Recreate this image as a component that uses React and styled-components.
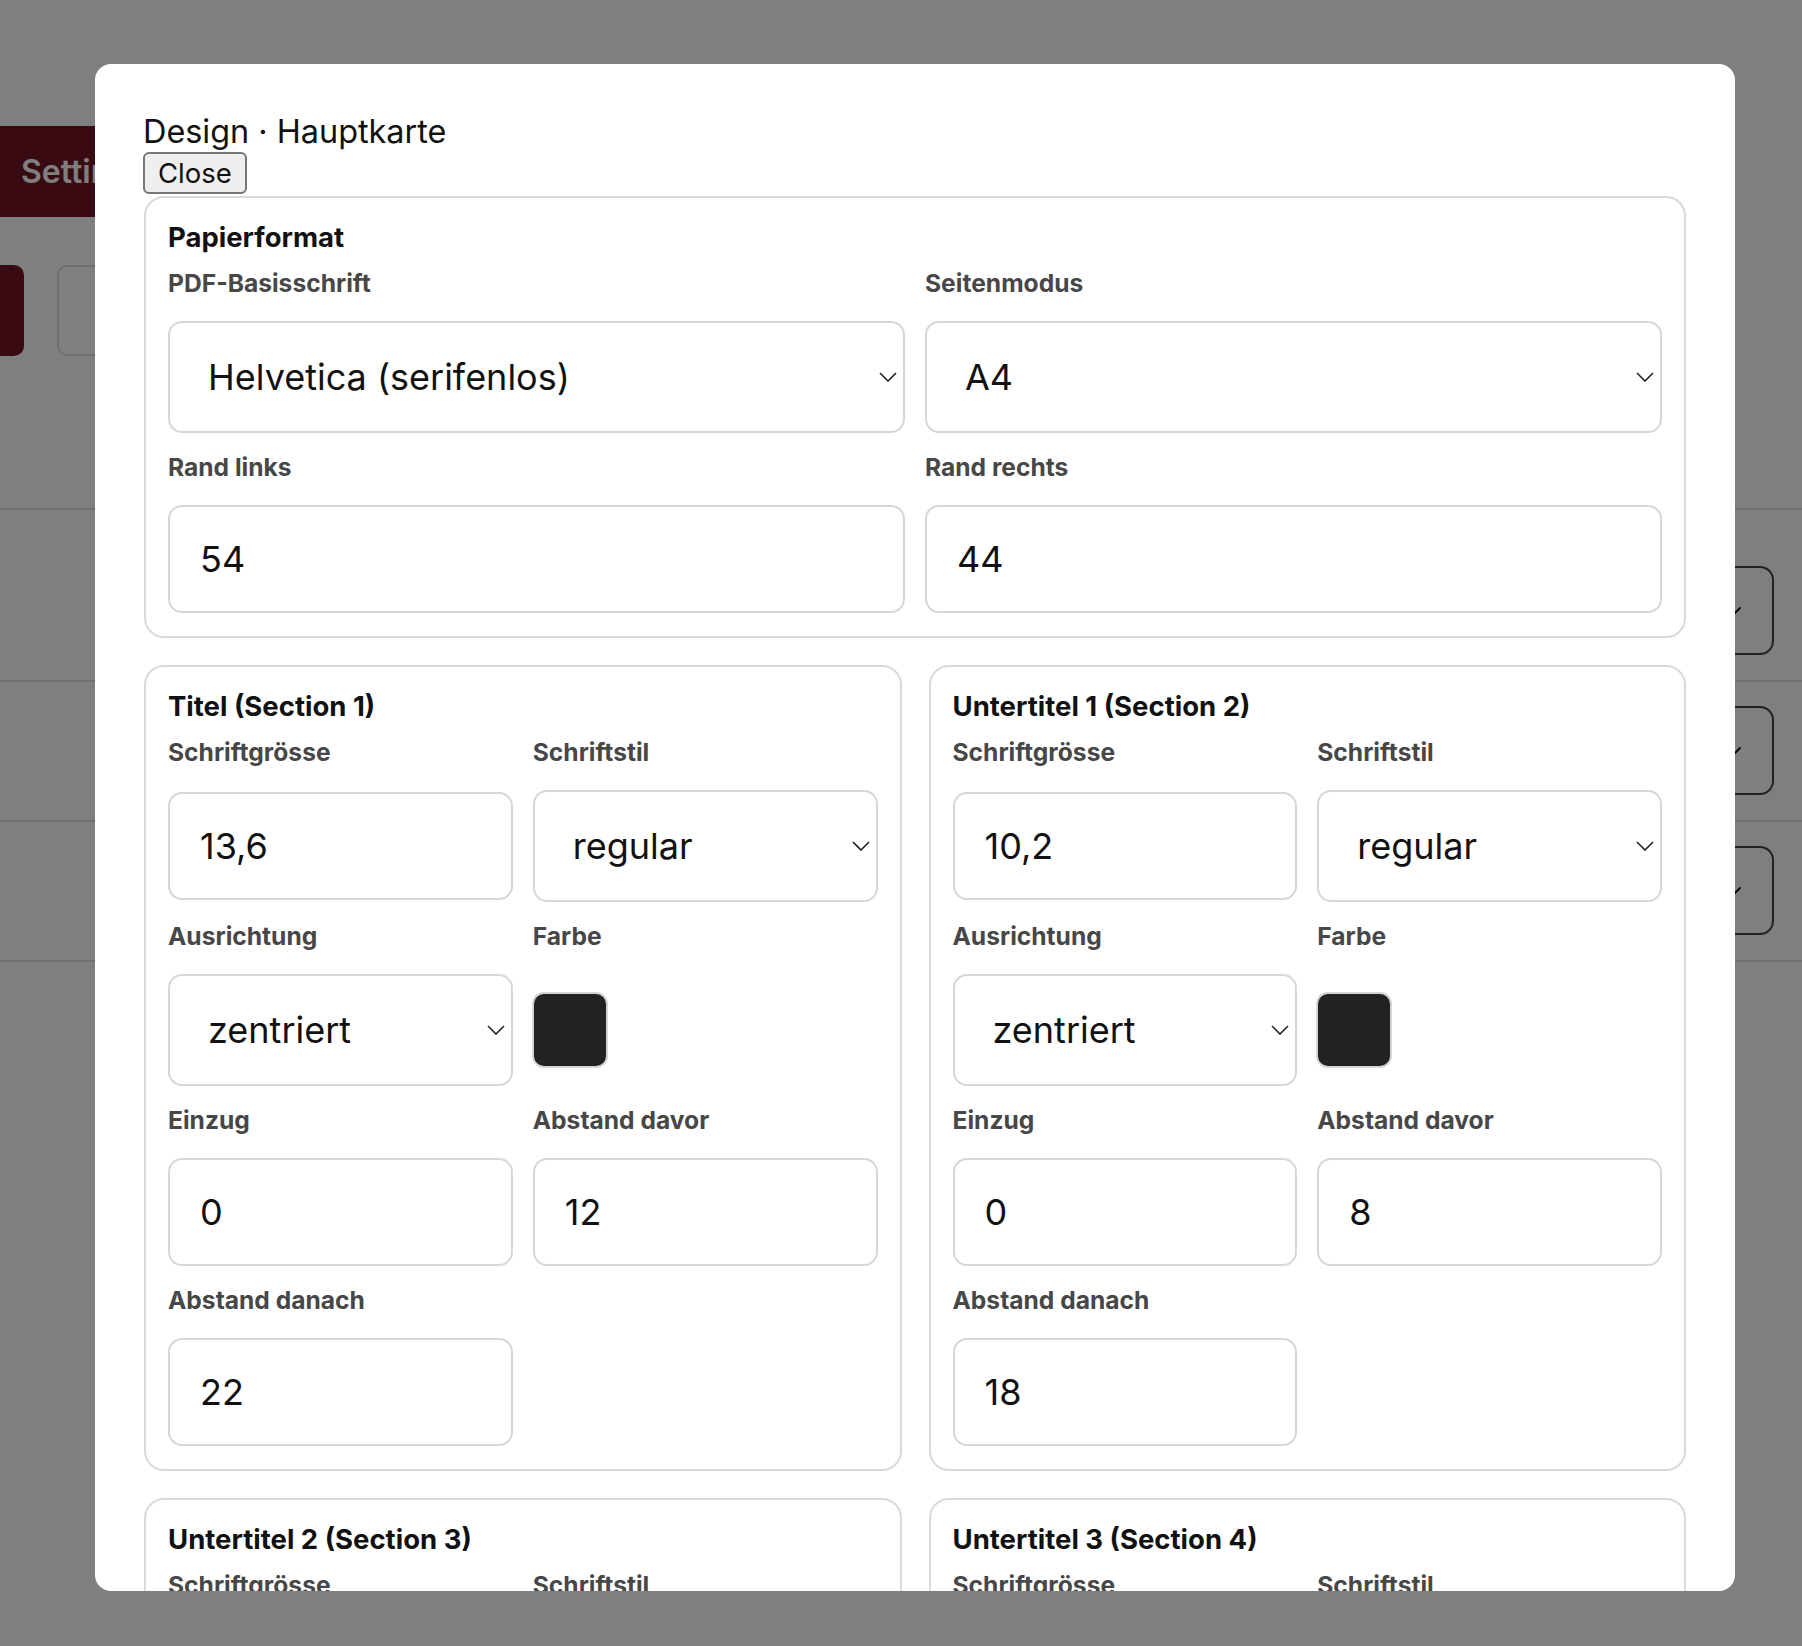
import React from "react";
import styled, { createGlobalStyle } from "styled-components";
import { ChevronDown } from "lucide-react";

const GlobalStyle = createGlobalStyle`
  html, body { margin: 0; padding: 0; background: #ffffff; }
  body { font-family: Inter, "Noto Sans", sans-serif; color: #111; }
  * { box-sizing: border-box; }
`;

/* ---------- background page (under overlay) ---------- */
const Page = styled.div`
  min-height: 1646px;
  padding-top: 126px;
  display: flex;
  flex-direction: column;
`;

const SettingsTab = styled.div`
  height: 91px;
  width: 320px;
  background: #741424;
  color: #ffffff;
  font-size: 32px;
  font-weight: 600;
  display: flex;
  align-items: center;
  padding-left: 21px;
`;

const ToolRow = styled.div`
  margin-top: 48px;
  height: 91px;
  display: flex;
  gap: 33px;
`;

const RedAction = styled.div`
  width: 24px;
  background: #741424;
  border-radius: 0 10px 10px 0;
`;

const GhostBox = styled.div`
  width: 420px;
  border: 2px solid #dcdcdc;
  border-radius: 10px;
`;

const Table = styled.div`
  margin-top: 152px;
  display: flex;
  flex-direction: column;
  border-bottom: 2px solid #e0e0e0;
`;

const TableRow = styled.div`
  border-top: 2px solid #e0e0e0;
  display: flex;
  justify-content: flex-end;
  padding: ${(p) => (p.$first ? "56px" : "24px")} 28px 25px 0;
`;

const RowAction = styled.div`
  height: 89px;
  width: 140px;
  border: 2px solid #444;
  border-radius: 14px;
  display: flex;
  align-items: center;
  justify-content: flex-end;
  padding-right: 26px;
  color: #111;
`;

/* ---------- overlay + modal ---------- */
const Overlay = styled.div`
  position: fixed;
  inset: 0;
  background: rgba(0, 0, 0, 0.5);
  display: flex;
  padding: 64px 67px 55px 95px;
`;

const Modal = styled.div`
  flex: 1;
  background: #ffffff;
  border-radius: 16px;
  padding: 48px 49px;
  overflow-y: auto;
  scrollbar-width: none;
  &::-webkit-scrollbar { display: none; }
`;

const ModalTitle = styled.div`
  font-size: 32.4px;
  line-height: 40px;
  font-weight: 400;
  color: #111;
  margin-left: -1px;
`;

const CloseButton = styled.button`
  display: block;
  height: 42px;
  margin: 0 0 2px -1px;
  padding: 0 13px;
  font-family: Inter, "Noto Sans", sans-serif;
  font-size: 27.5px;
  color: #111;
  background: #efefef;
  border: 2px solid #767676;
  border-radius: 6px;
`;

const Sections = styled.div`
  display: grid;
  grid-template-columns: 1fr 1fr;
  gap: 27px;
`;

const Card = styled.section`
  grid-column: ${(p) => (p.$wide ? "1 / -1" : "auto")};
  border: 2px solid #dadada;
  border-radius: 20px;
  padding: 23px 22px;
`;

const CardTitle = styled.h3`
  margin: 0 0 16px;
  font-size: 27.5px;
  line-height: 32px;
  font-weight: 700;
  color: #111;
`;

const FieldGrid = styled.div`
  display: grid;
  grid-template-columns: 1fr 1fr;
  column-gap: 20px;
  row-gap: 20px;
`;

const Field = styled.label`
  display: flex;
  flex-direction: column;
  gap: 23px;
`;

const LabelText = styled.span`
  font-size: 24.6px;
  line-height: 29px;
  font-weight: 700;
  color: #474747;
`;

const Slot = styled.div`
  flex: 1;
  display: flex;
  align-items: center;
  position: relative;
`;

const TextInput = styled.input`
  width: 100%;
  height: 108px;
  border: 2px solid #d7d7d7;
  border-radius: 14px;
  padding: 0 30px;
  font-family: Inter, "Noto Sans", sans-serif;
  font-size: 36px;
  color: #111;
  background: #fff;
  outline: none;
`;

const Select = styled.select`
  width: 100%;
  height: 112px;
  appearance: none;
  -webkit-appearance: none;
  border: 2px solid #d7d7d7;
  border-radius: 14px;
  padding: 0 50px 0 38px;
  font-family: Inter, "Noto Sans", sans-serif;
  font-size: 36px;
  color: #111;
  background: #fff;
  outline: none;
`;

const Arrow = styled.svg`
  position: absolute;
  right: 8px;
  top: 50%;
  margin-top: -5px;
  pointer-events: none;
`;

const Swatch = styled.div`
  width: 76px;
  height: 76px;
  margin-left: -1px;
  border-radius: 12px;
  background: ${(p) => p.$color};
  border: 2px solid #d4d4d4;
`;

function SelectField({ label, value, options }) {
  return (
    <Field>
      <LabelText>{label}</LabelText>
      <Slot>
        <Select defaultValue={value}>
          {options.map((o) => (
            <option key={o}>{o}</option>
          ))}
        </Select>
        <Arrow width="18" height="10" viewBox="0 0 18 10">
          <polyline points="1,1 9,9 17,1" fill="none" stroke="#222" strokeWidth="1.6" />
        </Arrow>
      </Slot>
    </Field>
  );
}

function InputField({ label, value }) {
  return (
    <Field>
      <LabelText>{label}</LabelText>
      <Slot>
        <TextInput defaultValue={value} />
      </Slot>
    </Field>
  );
}

function ColorField({ label, color }) {
  return (
    <Field>
      <LabelText>{label}</LabelText>
      <Slot>
        <Swatch $color={color} />
      </Slot>
    </Field>
  );
}

const styles = ["regular", "bold", "italic", "bold italic"];
const aligns = ["links", "zentriert", "rechts"];

const sections = [
  { title: "Titel (Section 1)", size: "13,6", before: "12", after: "22" },
  { title: "Untertitel 1 (Section 2)", size: "10,2", before: "8", after: "18" },
  { title: "Untertitel 2 (Section 3)", size: "9,4", before: "6", after: "12" },
  { title: "Untertitel 3 (Section 4)", size: "8,5", before: "4", after: "8" },
];

function SectionCard({ s }) {
  return (
    <Card>
      <CardTitle>{s.title}</CardTitle>
      <FieldGrid>
        <InputField label="Schriftgrösse" value={s.size} />
        <SelectField label="Schriftstil" value="regular" options={styles} />
        <SelectField label="Ausrichtung" value="zentriert" options={aligns} />
        <ColorField label="Farbe" color="#222222" />
        <InputField label="Einzug" value="0" />
        <InputField label="Abstand davor" value={s.before} />
        <InputField label="Abstand danach" value={s.after} />
      </FieldGrid>
    </Card>
  );
}

export default function App() {
  return (
    <>
      <GlobalStyle />
      <Page>
        <SettingsTab>Settings</SettingsTab>
        <ToolRow>
          <RedAction />
          <GhostBox />
        </ToolRow>
        <Table>
          {[0, 1, 2].map((i) => (
            <TableRow key={i} $first={i === 0}>
              <RowAction>
                <ChevronDown size={24} strokeWidth={2} />
              </RowAction>
            </TableRow>
          ))}
        </Table>
      </Page>
      <Overlay>
        <Modal>
          <ModalTitle>Design · Hauptkarte</ModalTitle>
          <CloseButton type="button">Close</CloseButton>
          <Sections>
            <Card $wide>
              <CardTitle>Papierformat</CardTitle>
              <FieldGrid>
                <SelectField
                  label="PDF-Basisschrift"
                  value="Helvetica (serifenlos)"
                  options={["Helvetica (serifenlos)", "Times (Serif)", "Courier (Mono)"]}
                />
                <SelectField label="Seitenmodus" value="A4" options={["A4", "A5", "Letter"]} />
                <InputField label="Rand links" value="54" />
                <InputField label="Rand rechts" value="44" />
              </FieldGrid>
            </Card>
            {sections.map((s) => (
              <SectionCard key={s.title} s={s} />
            ))}
          </Sections>
        </Modal>
      </Overlay>
    </>
  );
}
